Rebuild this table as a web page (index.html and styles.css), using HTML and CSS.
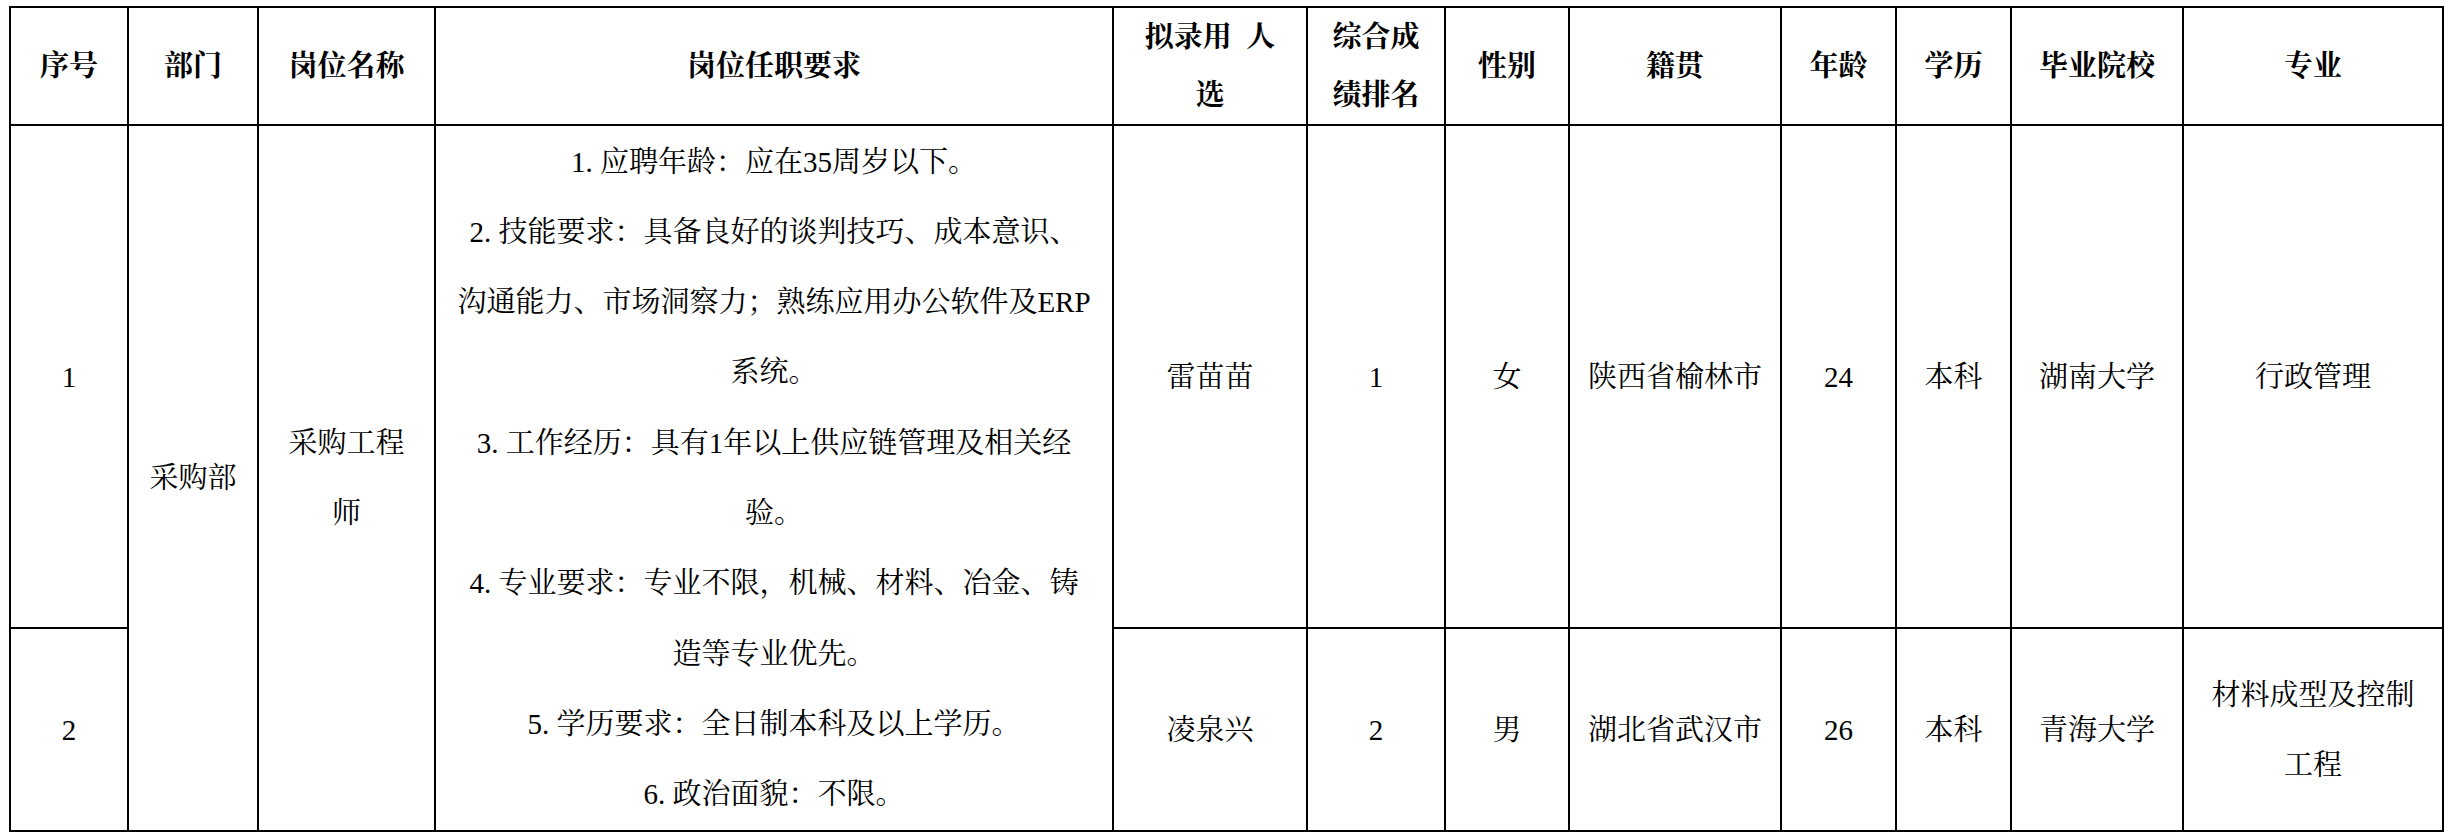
FILE: index.html
```html
<!DOCTYPE html>
<html lang="zh-CN">
<head>
<meta charset="utf-8">
<title>拟录用人员公示</title>
<link rel="stylesheet" href="styles.css">
</head>
<body>
<table class="grid">
  <colgroup>
    <col class="c-no">
    <col class="c-dept">
    <col class="c-post">
    <col class="c-req">
    <col class="c-name">
    <col class="c-rank">
    <col class="c-sex">
    <col class="c-home">
    <col class="c-age">
    <col class="c-edu">
    <col class="c-school">
    <col class="c-major">
  </colgroup>
  <thead>
    <tr class="head">
      <th>序号</th>
      <th>部门</th>
      <th>岗位名称</th>
      <th>岗位任职要求</th>
      <th>拟录用&nbsp;&nbsp;人<br>选</th>
      <th>综合成<br>绩排名</th>
      <th>性别</th>
      <th>籍贯</th>
      <th>年龄</th>
      <th>学历</th>
      <th>毕业院校</th>
      <th>专业</th>
    </tr>
  </thead>
  <tbody>
    <tr class="row-a">
      <td>1</td>
      <td rowspan="2">采购部</td>
      <td rowspan="2">采购工程<br>师</td>
      <td rowspan="2" class="req">
        <span class="ln"><span class="idx">1.</span>应聘年龄：应在35周岁以下。</span>
        <span class="ln"><span class="idx">2.</span>技能要求：具备良好的谈判技巧、成本意识、</span>
        <span class="ln">沟通能力、市场洞察力；熟练应用办公软件及ERP</span>
        <span class="ln">系统。</span>
        <span class="ln"><span class="idx">3.</span>工作经历：具有1年以上供应链管理及相关经</span>
        <span class="ln">验。</span>
        <span class="ln"><span class="idx">4.</span>专业要求：专业不限，机械、材料、冶金、铸</span>
        <span class="ln">造等专业优先。</span>
        <span class="ln"><span class="idx">5.</span>学历要求：全日制本科及以上学历。</span>
        <span class="ln"><span class="idx">6.</span>政治面貌：不限。</span>
      </td>
      <td>雷苗苗</td>
      <td>1</td>
      <td>女</td>
      <td>陕西省榆林市</td>
      <td>24</td>
      <td>本科</td>
      <td>湖南大学</td>
      <td>行政管理</td>
    </tr>
    <tr class="row-b">
      <td>2</td>
      <td>凌泉兴</td>
      <td>2</td>
      <td>男</td>
      <td>湖北省武汉市</td>
      <td>26</td>
      <td>本科</td>
      <td>青海大学</td>
      <td>材料成型及控制<br>工程</td>
    </tr>
  </tbody>
</table>
</body>
</html>
```

FILE: styles.css
```css
html, body {
  margin: 0;
  padding: 0;
  background: #ffffff;
}

body {
  font-family: "Liberation Serif", "Noto Serif CJK SC", "Noto Sans CJK SC", serif;
  font-size: 29px;
  color: #000000;
}

.grid {
  margin: 6px 0 0 9px;
  width: 2435px;
  border-collapse: collapse;
  table-layout: fixed;
}

.c-no { width: 118px; }
.c-dept { width: 130px; }
.c-post { width: 177px; }
.c-req { width: 678px; }
.c-name { width: 194px; }
.c-rank { width: 138px; }
.c-sex { width: 124px; }
.c-home { width: 212px; }
.c-age { width: 115px; }
.c-edu { width: 115px; }
.c-school { width: 172px; }
.c-major { width: 260px; }

.grid th,
.grid td {
  border: 2px solid #000000;
  padding: 0;
  text-align: center;
  vertical-align: middle;
  white-space: nowrap;
  overflow: hidden;
}

.grid th {
  font-weight: bold;
  line-height: 58px;
}

.grid td {
  font-weight: normal;
  line-height: 70px;
}

.head { height: 118px; }
.row-a { height: 503px; }
.row-b { height: 203px; }

.grid td.req {
  line-height: 70.3px;
}

.ln {
  display: block;
}

.idx {
  margin-right: 0.25em;
}
```
